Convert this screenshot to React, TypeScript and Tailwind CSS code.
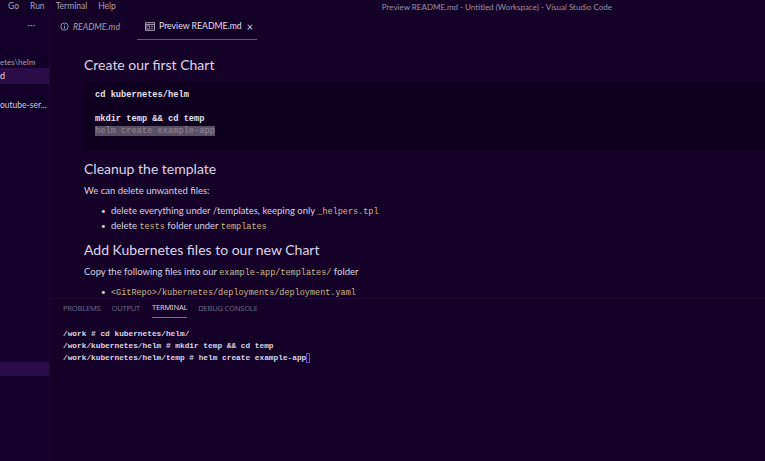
import React from "react";

const sans = { fontFamily: 'Lato, "Noto Sans", sans-serif' } as React.CSSProperties;

function InfoIcon() {
  return (
    <svg width="9" height="9" viewBox="0 0 16 16" className="shrink-0">
      <circle cx="8" cy="8" r="6.5" fill="none" stroke="#8fa6d8" strokeWidth="1.5" />
      <rect x="7.2" y="7" width="1.6" height="5" fill="#8fa6d8" />
      <rect x="7.2" y="4" width="1.6" height="1.6" fill="#8fa6d8" />
    </svg>
  );
}

function PreviewIcon() {
  return (
    <svg width="10" height="9" viewBox="0 0 16 14" className="shrink-0">
      <rect x="1" y="1" width="14" height="12" fill="none" stroke="#cfc8d8" strokeWidth="1.3" />
      <line x1="1" y1="4" x2="15" y2="4" stroke="#cfc8d8" strokeWidth="1.3" />
      <rect x="3" y="6" width="4" height="5" fill="none" stroke="#cfc8d8" strokeWidth="1" />
      <line x1="9" y1="7" x2="13" y2="7" stroke="#cfc8d8" strokeWidth="1" />
      <line x1="9" y1="10" x2="13" y2="10" stroke="#cfc8d8" strokeWidth="1" />
    </svg>
  );
}

const Code = ({ children }: { children: React.ReactNode }) => (
  <span className="font-['Liberation_Mono',monospace] text-[8.5px] text-[#cdb98a]">{children}</span>
);

export default function App() {
  return (
    <div className="w-[765px] h-[461px] overflow-hidden bg-[#150028] flex flex-col text-[#d6d0e0]" style={sans}>
      {/* title bar */}
      <div className="h-[13px] shrink-0 flex items-center text-[8.5px] text-[#a9a2b4] whitespace-nowrap">
        <span className="ml-[8px]">Go</span>
        <span className="ml-[11px]">Run</span>
        <span className="ml-[11px]">Terminal</span>
        <span className="ml-[11px]">Help</span>
        <span className="ml-[266px] text-[8px] text-[#9a93a6]">Preview README.md - Untitled (Workspace) - Visual Studio Code</span>
      </div>
      <div className="flex flex-1 min-h-0">
        {/* sidebar */}
        <div className="w-[50px] shrink-0 bg-[#13002a] border-r border-[#21083a] flex flex-col text-[9px] text-[#cfc8da] overflow-hidden whitespace-nowrap">
          <div className="h-[27px] flex items-start justify-end pr-[14px] pt-[6px] text-[#9a93a6] text-[10px] leading-none">···</div>
          <div className="h-[16px]" />
          <div className="h-[12px] leading-[12px] text-[8px] text-[#a8a0b4]">etes\helm</div>
          <div className="h-[16px] leading-[16px] bg-[#2b0b48] text-[#e2dcea]">d</div>
          <div className="h-[14px]" />
          <div className="h-[14px] leading-[14px] text-[8.5px] text-[#cfc8da]">outube-ser...</div>
          <div className="h-[250px]" />
          <div className="h-[14px] bg-[#2b0b48]" />
        </div>
        {/* main */}
        <div className="flex-1 flex flex-col min-w-0">
          {/* tabs */}
          <div className="h-[27px] shrink-0 flex items-stretch text-[8.7px] whitespace-nowrap">
            <div className="w-[87px] flex items-center pl-[10px] gap-[4px] text-[#a49cb2] italic">
              <InfoIcon />
              <span>README.md</span>
            </div>
            <div className="w-[120px] flex items-center pl-[8px] gap-[4px] text-[#e4dfec] border-b-[1.5px] border-[#7a3fb8]">
              <PreviewIcon />
              <span>Preview README.md</span>
              <span className="ml-[1px] text-[11px] leading-none text-[#d8d2e0]">×</span>
            </div>
          </div>
          {/* editor */}
          <div className="flex-1 min-h-0 overflow-hidden pl-[34px]">
            <div className="pt-[15px] text-[14px] leading-[20px] text-[#ddd6e8]">Create our first Chart</div>
            <div className="mt-[6px] -mr-[10px] bg-[#10001f] pl-[11px] pt-[8px] pb-[14px] font-['Liberation_Mono',monospace] text-[8.7px] leading-[12px] text-[#e6e0ee] font-bold">
              <div>cd kubernetes/helm</div>
              <div>&nbsp;</div>
              <div>mkdir temp &amp;&amp; cd temp</div>
              <div><span className="bg-[#5a5064] text-[#8e8698] font-normal">helm create example-app</span></div>
            </div>
            <div className="mt-[8px] text-[14px] leading-[20px] text-[#ddd6e8]">Cleanup the template</div>
            <div className="mt-[5px] text-[9.5px] leading-[14px]">We can delete unwanted files:</div>
            <ul className="mt-[6px] pl-[17px] text-[9.5px]">
              <li className="h-[15px] flex items-baseline"><span className="w-[10px] text-[8px]">•</span>delete everything under /templates, keeping only&nbsp;<Code>_helpers.tpl</Code></li>
              <li className="h-[15px] flex items-baseline"><span className="w-[10px] text-[8px]">•</span>delete&nbsp;<Code>tests</Code>&nbsp;folder under&nbsp;<Code>templates</Code></li>
            </ul>
            <div className="mt-[6px] text-[14px] leading-[20px] text-[#ddd6e8]">Add Kubernetes files to our new Chart</div>
            <div className="mt-[5px] h-[14px] text-[9.5px] flex items-baseline">Copy the following files into our&nbsp;<Code>example-app/templates/</Code>&nbsp;folder</div>
            <ul className="mt-[7px] pl-[17px] text-[9.5px]">
              <li className="h-[15px] flex items-baseline"><span className="w-[10px] text-[8px]">•</span><Code>&lt;GitRepo&gt;/kubernetes/deployments/deployment.yaml</Code></li>
            </ul>
          </div>
          {/* panel */}
          <div className="h-[163px] shrink-0 border-t border-[#21083a] flex flex-col">
            <div className="h-[19px] flex items-stretch pl-[13px] text-[7.5px] tracking-tight text-[#6e6680]" style={{ fontFamily: '"Noto Sans", sans-serif' }}>
              <div className="flex items-center mr-[11px]">PROBLEMS</div>
              <div className="flex items-center mr-[12px]">OUTPUT</div>
              <div className="flex items-center mr-[11px] text-[#d8d2e2] border-b border-[#8a5ac8]">TERMINAL</div>
              <div className="flex items-center">DEBUG CONSOLE</div>
            </div>
            <div className="pl-[13px] pt-[10px] font-['Liberation_Mono',monospace] text-[7.8px] leading-[12px] text-[#ddd6e6] font-bold">
              <div>/work # cd kubernetes/helm/</div>
              <div>/work/kubernetes/helm # mkdir temp &amp;&amp; cd temp</div>
              <div className="flex items-center">/work/kubernetes/helm/temp # helm create example-app<span className="inline-block w-[4px] h-[10px] border border-[#7a3fc0]" /></div>
            </div>
          </div>
        </div>
      </div>
    </div>
  );
}
